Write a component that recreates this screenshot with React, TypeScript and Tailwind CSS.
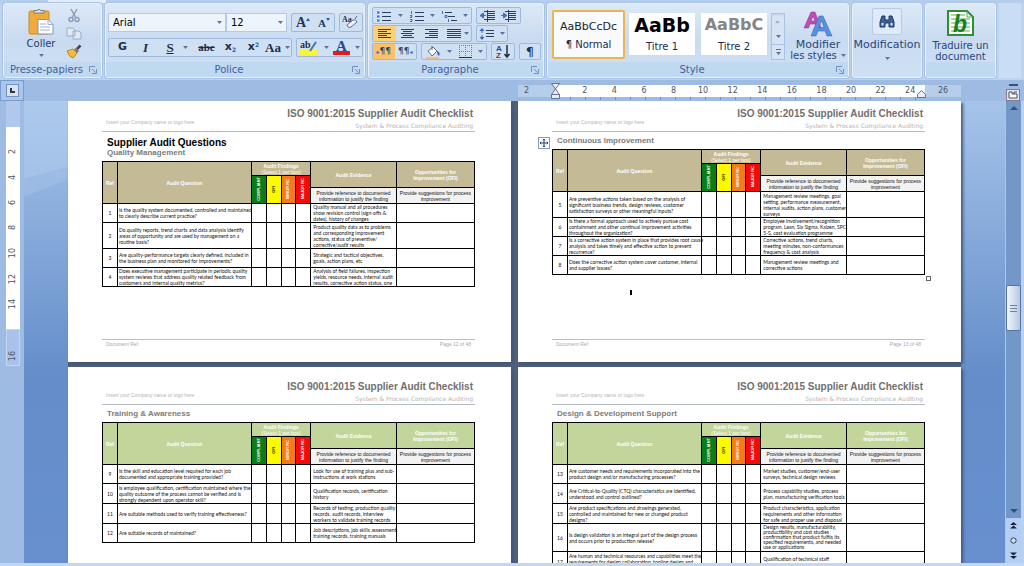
import React from 'react';

interface Row {
    ref: number;
    question: string;
    evidence: string;
    height: string;
    dense?: boolean;
}

interface PageData {
    title?: string;
    section: string;
    head: string;
    footer: string;
    rows: Row[];
    selected?: boolean;
}

const TAN = 'bg-[#c4bb96]';
const GREEN = 'bg-[#c2d69b]';
const SHORT = 'h-[19px]';
const MID = 'h-[20px]';
const TALL = 'h-[26px]';

const pages: PageData[] = [
    {
        title: 'Supplier Audit Questions',
        section: 'Quality Management',
        head: TAN,
        footer: 'Page 12 of 48',
        rows: [
            { ref: 1, height: SHORT, question: 'Is the quality system documented, controlled and maintained\nto clearly describe current practice?', evidence: 'Quality manual and all procedures\nshow revision control (sign-offs &\ndates), history of changes' },
            { ref: 2, height: TALL, question: 'Do quality reports, trend charts and data analysis identify\nareas of opportunity and are used by management on a\nroutine basis?', evidence: 'Product quality data as to problems\nand corresponding improvement\nactions, status of preventive/\ncorrective/audit results' },
            { ref: 3, height: SHORT, question: 'Are quality-performance targets clearly defined, included in\nthe business plan and monitored for improvements?', evidence: 'Strategic and tactical objectives,\ngoals, action plans, etc' },
            { ref: 4, height: SHORT, question: 'Does executive management participate in periodic quality\nsystem reviews that address quality related feedback from\ncustomers and internal quality metrics?', evidence: 'Analysis of field failures, inspection\nyields, resource needs, internal audit\nresults, corrective action status, one' },
        ],
    },
    {
        section: 'Continuous Improvement',
        head: TAN,
        footer: 'Page 13 of 48',
        selected: true,
        rows: [
            { ref: 5, height: TALL, question: 'Are preventive actions taken based on the analysis of\nsignificant business trends, design reviews, customer\nsatisfaction surveys or other meaningful inputs?', evidence: 'Management review meetings, goal\nsetting, performance measurement,\ninternal audits, action plans, customer\nsurveys' },
            { ref: 6, height: SHORT, question: 'Is there a formal approach used to actively pursue cost\ncontainment and other continual improvement activities\nthroughout the organization?', evidence: 'Employee involvement/recognition\nprogram, Lean, Six Sigma, Kaizen, SPC,\n5-S, cost evaluation programme' },
            { ref: 7, height: SHORT, question: 'Is a corrective action system in place that provides root cause\nanalysis and takes timely and effective action to prevent\nrecurrence?', evidence: 'Corrective actions, trend charts,\nmeeting minutes, non-conformances\nfrequency & cost analysis' },
            { ref: 8, height: SHORT, question: 'Does the corrective action system cover customer, internal\nand supplier issues?', evidence: 'Management review meetings and\ncorrective actions' },
        ],
    },
    {
        section: 'Training & Awareness',
        head: GREEN,
        footer: 'Page 14 of 48',
        rows: [
            { ref: 9, height: SHORT, question: 'Is the skill and education level required for each job\ndocumented and appropriate training provided?', evidence: 'Look for use of training plus and sub-\ninstructions at work stations' },
            { ref: 10, height: MID, question: 'Is employee qualification, certification maintained where the\nquality outcome of the process cannot be verified and is\nstrongly dependent upon operator skill?', evidence: 'Qualification records, certification\nhistory' },
            { ref: 11, height: MID, question: 'Are suitable methods used to verify training effectiveness?', evidence: 'Records of testing, production quality\nrecords, audit records, interview\nworkers to validate training records' },
            { ref: 12, height: SHORT, question: 'Are suitable records of maintained?', evidence: 'Job descriptions, job skills assessment,\ntraining records, training manuals' },
        ],
    },
    {
        section: 'Design & Development Support',
        head: GREEN,
        footer: 'Page 15 of 48',
        rows: [
            { ref: 13, height: SHORT, question: 'Are customer needs and requirements incorporated into the\nproduct design and/or manufacturing processes?', evidence: 'Market studies, customer/end-user\nsurveys, technical design reviews' },
            { ref: 14, height: MID, question: 'Are Critical-to-Quality (CTQ) characteristics are identified,\nunderstood and control outlined?', evidence: 'Process capability studies, process\nplan, manufacturing verification tools' },
            { ref: 15, height: MID, question: 'Are product specifications and drawings generated,\ncontrolled and maintained for new or changed product\ndesigns?', evidence: 'Product characteristics, application\nrequirements and other information\nfor safe and proper use and disposal' },
            { ref: 16, height: 'h-[28px]', dense: true, question: 'Is design validation is an integral part of the design process\nand occurs prior to production release?', evidence: 'Design results, manufacturability,\nproductibility and cost studies\nconfirmation that product fulfils its\nspecified requirements, and needed\nuse or applications' },
            { ref: 17, height: MID, question: 'Are human and technical resources and capabilities meet the\nrequirements for design collaboration, tooling design and\nmanufacturing?', evidence: 'Qualification of technical staff\nhardware and/or capabilities, CAD' },
        ],
    },
];

const findings = [
    { label: 'COMPLIANT', style: 'bg-[#0a7d17] text-white' },
    { label: 'OFI', style: 'bg-[#fdf900] text-black' },
    { label: 'MINOR NC', style: 'bg-[#f47a1c] text-white' },
    { label: 'MAJOR NC', style: 'bg-[#f50a0a] text-white' },
];

const AuditTable: React.FC<{ page: PageData }> = ({ page }) => (
    <table className="w-full table-fixed border-collapse text-[5px] leading-[6px] text-[#111] [&_td]:border [&_td]:border-black [&_td]:p-0 [&_th]:border [&_th]:border-black [&_th]:p-0">
        <colgroup>
            <col className="w-[4%]" />
            <col className="w-[36%]" />
            <col className="w-[4%]" />
            <col className="w-[4%]" />
            <col className="w-[4%]" />
            <col className="w-[4%]" />
            <col className="w-[23%]" />
            <col className="w-[21%]" />
        </colgroup>
        <thead>
            <tr className="h-[14px] text-white">
                <th rowSpan={3} className={page.head}>Ref</th>
                <th rowSpan={3} className={page.head}>Audit Question</th>
                <th colSpan={4} className={page.head}>
                    Audit Findings
                    <span className="block font-normal">(Select 1 per box)</span>
                </th>
                <th rowSpan={2} className={page.head}>Audit Evidence</th>
                <th rowSpan={2} className={page.head}>Opportunities for<br />Improvement (OFI)</th>
            </tr>
            <tr className="h-[12px]">
                {findings.map((f) => (
                    <th key={f.label} rowSpan={2} className={f.style}>
                        <span className="inline-block rotate-180 text-[4px] [writing-mode:vertical-rl]">{f.label}</span>
                    </th>
                ))}
            </tr>
            <tr className="h-[16px]">
                <th className="bg-[#f2f2f2] font-normal whitespace-pre">{'Provide reference to documented\ninformation to justify the finding'}</th>
                <th className="bg-[#f2f2f2] font-normal whitespace-pre">{'Provide suggestions for process\nimprovement'}</th>
            </tr>
        </thead>
        <tbody className="font-['Lato',sans-serif]">
            {page.rows.map((row) => (
                <tr key={row.ref} className={row.height}>
                    <td className="text-center">{row.ref}</td>
                    <td className="whitespace-pre"><div className="pl-px">{row.question}</div></td>
                    <td />
                    <td />
                    <td />
                    <td />
                    <td className="whitespace-pre"><div className={row.dense ? 'pl-0.5 leading-[5px]' : 'pl-0.5'}>{row.evidence}</div></td>
                    <td />
                </tr>
            ))}
        </tbody>
    </table>
);

const Page: React.FC<{ page: PageData; top: string }> = ({ page, top }) => (
    <article className={`flex h-[261px] flex-col bg-white pr-9 pl-[34px] font-['Liberation_Sans',Arial,sans-serif] shadow-[2px_2px_3px_#3f5678] ${top}`}>
        <header className="flex items-end justify-between border-b border-[#b4bcc4] pr-0.5 pl-1 text-[#b4b4b4]">
            <p className="text-[5px] leading-[18px]">Insert your Company name or logo here</p>
            <div className="text-right">
                <p className="text-[10px] leading-[12px] font-bold text-[#707070]">ISO 9001:2015 Supplier Audit Checklist</p>
                <p className="text-[6px] leading-[11px] font-['DejaVu_Sans',sans-serif]">System &amp; Process Compliance Auditing</p>
            </div>
        </header>
        <div className={page.title ? 'pt-[5px] pb-[3px] pl-[5px]' : 'pt-1 pb-[3px] pl-[5px]'}>
            {page.title && <h1 className="text-[10px] leading-[11px] font-bold text-black">{page.title}</h1>}
            <h2 className="text-[8px] leading-[10px] font-bold text-[#7c7c7c]">{page.section}</h2>
        </div>
        <div className="relative">
            <AuditTable page={page} />
            {page.selected && (
                <>
                    <svg className="absolute -top-3 -left-3.5 size-3" viewBox="0 0 12 12" aria-hidden="true">
                        <rect x=".5" y=".5" width="11" height="11" fill="#fff" stroke="#8a9fc0" />
                        <path d="M6 2v8M2 6h8M4.8 3.2L6 2l1.2 1.2M4.800 8.800L6 10l1.200-1.200M3.200 4.800L2 6l1.200 1.200M8.800 4.800L10 6 8.800 7.200" stroke="#23406e" fill="none" />
                    </svg>
                    <span className="absolute -right-1.5 -bottom-1.5 size-[5px] border border-[#666] bg-white" />
                    <span className="absolute -bottom-5 left-[21%] h-[5px] w-0.5 bg-black" />
                </>
            )}
        </div>
        <footer className="mt-auto mb-[14px] flex justify-between border-t border-[#bdbdbd] px-1 text-[5px] leading-[8px] text-[#aaa]">
            <span>Document Ref:</span>
            <span>{page.footer}</span>
        </footer>
    </article>
);

const Caret: React.FC = () => (
    <svg className="h-[3px] w-[5px] shrink-0" viewBox="0 0 5 3" aria-hidden="true"><path d="M0 0h5L2.500 3z" fill="#5a74a0" /></svg>
);

const Launcher: React.FC<{ label: string }> = ({ label }) => (
    <button aria-label={label} className="mr-1 ml-auto">
        <svg className="size-2" viewBox="0 0 8 8" aria-hidden="true"><path d="M.5 6V.5H6M3 3l3.500 3.500M7.500 3v4.500H3" stroke="#7691bd" fill="none" /></svg>
    </button>
);

interface GroupProps {
    label?: string;
    launcher?: boolean;
    width: string;
    children: React.ReactNode;
}

const Group: React.FC<GroupProps> = ({ label, launcher, width, children }) => (
    <section className={`flex h-[75px] shrink-0 flex-col rounded-[3px] border border-[#e8f2fc] bg-linear-to-b from-[#dce8f6] via-[#c9dbf1] to-[#cfe0f4] shadow-[0_0_0_1px_#a9c3e4] ${width}`}>
        <div className="min-h-0 flex-1">{children}</div>
        {label !== undefined && (
            <div className="flex h-[15px] items-center bg-[#c1d8f1] text-[#3f62a0]">
                <span className="flex-1 text-center whitespace-nowrap">{label}</span>
                {launcher && <Launcher label={`Options ${label}`} />}
            </div>
        )}
    </section>
);

const BOX = 'flex h-[19px] items-center rounded-[2px] border border-[#9db9dc] bg-[#cfe0f3]';

// three or four text lines with optional bullets, used by every paragraph button
const Lines: React.FC<{ d: string; extra?: React.ReactNode }> = ({ d, extra }) => (
    <svg className="h-3 w-4 shrink-0" viewBox="0 0 16 12" aria-hidden="true">
        <path d={d} stroke="#2b3f63" fill="none" />
        {extra}
    </svg>
);

const Clipboard: React.FC = () => (
    <Group label="Presse-papiers" launcher width="w-[99px]">
        <div className="flex h-full pt-1 pl-5">
            <button className="flex w-[34px] flex-col items-center text-[#1e3a6e]">
                <svg className="h-7 w-7" viewBox="0 0 28 28" aria-hidden="true">
                    <rect x="2" y="3" width="20" height="23" rx="1.500" fill="#f0ab3c" stroke="#c98a2b" />
                    <path d="M7 5V2.500h3Q12 0 14 2.500h3V5z" fill="#dfe3ea" stroke="#7d7a72" />
                    <path d="M11 11.500h10l5 5V26H11z" fill="#fff" stroke="#8396b8" />
                    <path d="M21 11.500v5h5M13 16h6M13 19h10M13 22h10" stroke="#9db0cf" fill="none" />
                </svg>
                <span className="pt-0.5 leading-3">Coller</span>
                <span className="mt-1"><Caret /></span>
            </button>
            <div className="ml-1.5 flex w-5 flex-col items-center gap-1">
                <button aria-label="Couper">
                    <svg className="h-[15px] w-4" viewBox="0 0 16 15" aria-hidden="true"><path d="M5 1l5 9M11 1l-5 9" stroke="#8c9dbb" strokeWidth="1.500" /><circle cx="5" cy="11.500" r="2" fill="none" stroke="#8c9dbb" strokeWidth="1.500" /><circle cx="11" cy="11.500" r="2" fill="none" stroke="#8c9dbb" strokeWidth="1.500" /></svg>
                </button>
                <button aria-label="Copier">
                    <svg className="h-[13px] w-4" viewBox="0 0 16 13" aria-hidden="true"><path d="M1 1h6l2 2v6H1zM7 4h6l2 2v6H7z" fill="#e3e9f2" stroke="#9aabc8" /></svg>
                </button>
                <button aria-label="Reproduire la mise en forme">
                    <svg className="h-[15px] w-4" viewBox="0 0 16 15" aria-hidden="true"><path d="M1 7l6-2 4 4-4 5q-4-1-6-7z" fill="#f2bf45" stroke="#b98622" /><path d="M8 5l2-1 3 3-2 2z" fill="#777" /><path d="M11 5l3.500-3.500" stroke="#3d4454" strokeWidth="2.500" /></svg>
                </button>
            </div>
        </div>
    </Group>
);

const FontGroup: React.FC = () => (
    <Group label="Police" launcher width="w-[260px]">
        <div className="flex items-center pt-[9px] pl-0.5">
            <label className="relative w-[118px]">
                <select aria-label="Police" className="h-[19px] w-full appearance-none border border-[#b3c9e6] bg-[#eef4fb] pl-1 text-black">
                    <option>Arial</option>
                </select>
                <span className="pointer-events-none absolute inset-y-0 right-1 flex items-center"><Caret /></span>
            </label>
            <label className="relative w-[61px]">
                <select aria-label="Taille" className="h-[19px] w-full appearance-none border border-[#b3c9e6] bg-[#eef4fb] pl-1 text-black">
                    <option>12</option>
                </select>
                <span className="pointer-events-none absolute inset-y-0 right-1 flex items-center"><Caret /></span>
            </label>
            <div className={`ml-1 w-[44px] justify-around font-['Liberation_Serif',serif] font-bold text-[#1f3358] ${BOX}`}>
                <button className="flex text-[14px] leading-4">A<svg className="mt-0.5 size-1" viewBox="0 0 4 4" aria-hidden="true"><path d="M0 4h4L2 1z" fill="#2d5aa8" /></svg></button>
                <button className="flex text-[11px] leading-4">A<svg className="mt-0.5 size-1" viewBox="0 0 4 4" aria-hidden="true"><path d="M0 1h4L2 4z" fill="#2d5aa8" /></svg></button>
            </div>
            <button aria-label="Effacer la mise en forme" className={`ml-1 w-6 justify-center ${BOX}`}>
                <svg className="h-[15px] w-[18px]" viewBox="0 0 18 15" aria-hidden="true">
                    <text x="0" y="7" fontSize="8" fontFamily="Liberation Serif, serif" fontWeight="bold" fill="#1f3358">Aa</text>
                    <path d="M5 10l6-5q3-1 4 2l-6 5q-3 2-4-2z" fill="#f4f5f8" stroke="#5d6c8a" /><path d="M13 4l2-3" stroke="#5d6c8a" />
                </svg>
            </button>
        </div>
        <div className="flex items-center pt-[6px] pl-0.5 text-[#1f2c48]">
            <div className={`w-[184px] pl-0.5 ${BOX}`}>
                <button className="w-[23px] text-[11px] font-bold">G</button>
                <button className="w-[23px] font-['Liberation_Serif',serif] text-[13px] font-bold italic">I</button>
                <button className="w-[26px] font-['Liberation_Serif',serif] text-[13px] font-bold underline">S</button>
                <Caret />
                <button className="ml-1.5 w-[25px] font-['Liberation_Serif',serif] text-[11px] font-bold line-through">abc</button>
                <button className="w-[23px] text-[11px] font-bold">x<sub className="text-[6px] text-[#2d5aa8]">2</sub></button>
                <button className="w-[23px] text-[11px] font-bold">x<sup className="text-[6px] text-[#2d5aa8]">2</sup></button>
                <button className="mr-1 font-['Liberation_Serif',serif] text-[13px] font-bold">Aa</button>
                <Caret />
            </div>
            <div className={`ml-1 w-[67px] justify-around ${BOX}`}>
                <button aria-label="Surlignage">
                    <svg className="h-[17px] w-5" viewBox="0 0 20 17" aria-hidden="true">
                        <rect x="1" y="10" width="17" height="6" fill="#f7f53a" />
                        <text x="1" y="9" fontSize="10" fontFamily="Liberation Serif, serif" fontWeight="bold" fill="#1f2c48">ab</text>
                        <path d="M11 12l6-9" stroke="#53719f" strokeWidth="2" />
                    </svg>
                </button>
                <Caret />
                <button aria-label="Couleur de police">
                    <svg className="h-[17px] w-[17px]" viewBox="0 0 17 17" aria-hidden="true">
                        <text x="3" y="12" fontSize="15" fontFamily="Liberation Serif, serif" fontWeight="bold" fill="#24499a">A</text>
                        <rect y="12" width="17" height="4" fill="#df1b1b" />
                    </svg>
                </button>
                <Caret />
            </div>
        </div>
    </Group>
);

const PBOX = 'flex h-[17px] items-center rounded-[2px] border border-[#9db9dc] bg-[#cfe0f3]';

const ParagraphGroup: React.FC = () => (
    <Group label="Paragraphe" launcher width="w-[176px]">
        <div className="flex flex-col gap-px pt-[3px] pl-[3px]">
            <div className="flex gap-1">
                <div className={`w-[100px] justify-around ${PBOX}`}>
                    <button aria-label="Puces"><Lines d="M6 2.500h9M6 6.500h9M6 10.500h9" extra={<path d="M1 1.500h2.500v2H1zM1 5.500h2.500v2H1zM1 9.500h2.500v2H1z" fill="#3f6fc0" />} /></button>
                    <Caret />
                    <button aria-label="Numérotation"><Lines d="M6 2.500h9M6 6.500h9M6 10.500h9" extra={<path d="M2.500 1v3M1 5.500h2v1l-2 1h2M1 9.500h2v2H1" stroke="#3f6fc0" fill="none" />} /></button>
                    <Caret />
                    <button aria-label="Liste à plusieurs niveaux"><Lines d="M4 2.500h7M7 6.500h7M10 10.500h6" extra={<path d="M1.500 1v3M4 5.500h2v2H4zM7.500 9v3" stroke="#3f6fc0" fill="none" />} /></button>
                    <Caret />
                </div>
                <div className={`w-[45px] justify-around ${PBOX}`}>
                    <button aria-label="Diminuer le retrait"><Lines d="M4 1.500h11M8 3.500h7M8 5.500h7M8 7.500h7M4 9.500h11M7.500 0v12" extra={<path d="M0 5.500L3.500 3v5zM3 5.500h3" fill="#3f6fc0" stroke="#3f6fc0" />} /></button>
                    <button aria-label="Augmenter le retrait"><Lines d="M4 1.500h11M8 3.500h7M8 5.500h7M8 7.500h7M4 9.500h11M7.500 0v12" extra={<path d="M6 5.500L2.500 3v5zM0 5.500h3" fill="#3f6fc0" stroke="#3f6fc0" />} /></button>
                </div>
            </div>
            <div className="flex gap-1">
                <div className={`w-[100px] ${PBOX}`}>
                    <button aria-label="Aligner à gauche" className="flex h-full w-[23px] items-center justify-center bg-[#fbd077]"><Lines d="M1 1.500h13M1 3.500h9M1 5.500h13M1 7.500h9M1 9.500h13" /></button>
                    <button aria-label="Centrer" className="flex w-6 justify-center"><Lines d="M1 1.500h13M3 3.500h9M1 5.500h13M3 7.500h9M1 9.500h13" /></button>
                    <button aria-label="Aligner à droite" className="flex w-6 justify-center"><Lines d="M1 1.500h13M5 3.500h9M1 5.500h13M5 7.500h9M1 9.500h13" /></button>
                    <button aria-label="Justifier" className="flex w-5 justify-center"><Lines d="M1 1.500h14M1 3.500h14M1 5.500h14M1 7.500h14M1 9.500h14" /></button>
                    <Caret />
                </div>
                <button aria-label="Interligne" className={`w-8 justify-around ${PBOX}`}>
                    <Lines d="M7 2.500h8M7 5.500h8M7 8.500h8" extra={<path d="M3 0l2.500 3h-5zM3 12L.500 9h5zM2.500 3h1v2h-1zM2.500 7h1v2h-1z" fill="#3067c4" />} />
                    <Caret />
                </button>
            </div>
            <div className="flex gap-1">
                <div className={`w-[45px] ${PBOX}`}>
                    <button className="h-full w-[22px] bg-[#fbc06a] text-[9px] text-[#2b3f63]"><span className="text-[6px] text-[#3067c4]">▸</span>¶¶</button>
                    <button className="w-[22px] text-[9px] text-[#2b3f63]">¶¶<span className="text-[6px] text-[#3067c4]">◂</span></button>
                </div>
                <div className={`w-[66px] justify-around ${PBOX}`}>
                    <button aria-label="Trame de fond">
                        <svg className="h-[14px] w-4" viewBox="0 0 16 14" aria-hidden="true"><path d="M3 6l5-4 4 4-5 5z" fill="#fff" stroke="#5d6c8a" /><path d="M7 5V1" stroke="#5d6c8a" /><path d="M12 6q4 1 2 5-2-1-2-5z" fill="#3067c4" /><path d="M1 12h13v2H1z" fill="#e8bf95" /></svg>
                    </button>
                    <Caret />
                    <button aria-label="Bordures">
                        <svg className="size-[13px]" viewBox="0 0 13 13" aria-hidden="true"><path d="M.500 0v12M6.500 0v12M12.500 0v12M0 .500h13M0 6.500h13" stroke="#6f7f9c" strokeDasharray="1 1" /><path d="M0 12.500h13" stroke="#1f2c48" /></svg>
                    </button>
                    <Caret />
                </div>
                <button aria-label="Trier" className={`w-6 justify-center ${PBOX}`}>
                    <svg className="h-[15px] w-4" viewBox="0 0 16 15" aria-hidden="true">
                        <text x="1" y="7" fontSize="8" fontFamily="Liberation Sans, sans-serif" fontWeight="bold" fill="#24499a">A</text>
                        <text x="1" y="14" fontSize="8" fontFamily="Liberation Sans, sans-serif" fontWeight="bold" fill="#a52323">Z</text>
                        <path d="M12 1v12M9.500 10l2.500 3 2.500-3" stroke="#1f2c48" strokeWidth="1.500" fill="none" />
                    </svg>
                </button>
                <button className={`w-[22px] justify-center text-[13px] text-[#1f2c48] ${PBOX}`}>¶</button>
            </div>
        </div>
    </Group>
);

const StyleGroup: React.FC = () => (
    <Group label="Style" launcher width="w-[302px]">
        <div className="flex h-full items-start pt-1.5 pl-1 text-[#1b2a4d]">
            <button className="flex h-[49px] w-[73px] flex-col items-center justify-center rounded-[2px] border-2 border-[#eab64c] bg-[#f8fafd]">
                <span className="text-[11px] leading-5 text-[#222]">AaBbCcDc</span>
                <span className="leading-4">¶ Normal</span>
            </button>
            <button className="mt-[3px] ml-1 flex h-[42px] w-[66px] flex-col items-center justify-between bg-white">
                <span className="text-[19px] leading-6 font-bold text-black">AaBb</span>
                <span className="leading-4">Titre 1</span>
            </button>
            <button className="mt-[3px] ml-1.5 flex h-[42px] w-[66px] flex-col items-center justify-between bg-white">
                <span className="text-[16px] leading-6 font-bold text-[#858585]">AaBbC</span>
                <span className="leading-4">Titre 2</span>
            </button>
            <div className="mt-[3px] ml-1 flex h-[47px] w-3.5 flex-col divide-y divide-[#a9c3e4] border border-[#a9c3e4] bg-[#d5e3f4]">
                <button aria-label="Haut" className="flex flex-1 rotate-180 items-center justify-center opacity-50"><Caret /></button>
                <button aria-label="Bas" className="flex flex-1 items-center justify-center"><Caret /></button>
                <button aria-label="Autres" className="flex flex-1 flex-col items-center justify-center gap-0.5"><span className="h-px w-[5px] bg-[#5a74a0]" /><Caret /></button>
            </div>
            <button className="ml-1 flex w-[58px] flex-col items-center text-[11px] leading-[11px] whitespace-nowrap text-[#274679]">
                <svg className="h-[29px] w-[30px]" viewBox="0 0 30 29" aria-hidden="true">
                    <path d="M1 18L8 2h4l6 16h-4l-1.500-4H7l-1.500 4zM8 11h4l-2-5z" fill="#c04bb4" fillRule="evenodd" stroke="#8c2f86" strokeWidth=".5" />
                    <path d="M8 26l8-20h4l9 20h-5l-2-5h-7l-2 5zM16 17.500h5l-2.500-7z" fill="#5b8fdd" fillRule="evenodd" stroke="#2f5fa8" strokeWidth=".5" />
                </svg>
                <span>Modifier</span>
                <span className="flex items-center gap-1 text-[10px]">les styles <Caret /></span>
            </button>
        </div>
    </Group>
);

const Ribbon: React.FC = () => (
    <nav className="bg-[#bdd3ee] pb-0.5 text-[10px]">
        <div className="flex h-[3px] bg-[#b4cdec]"><span className="ml-12 w-[58px] bg-[#e4eefa]" /></div>
        <div className="mr-[3px] ml-[3px] flex gap-[3px]">
            <Clipboard />
            <FontGroup />
            <ParagraphGroup />
            <StyleGroup />
            <Group width="w-[70px]">
                <button className="flex w-full flex-col items-center pt-1 text-[11px] leading-3 text-[#274679]">
                    <span className="flex h-[27px] w-[30px] items-center justify-center rounded-[2px] border border-[#b5cbe8] bg-[#dfeaf8]">
                        <svg className="h-[13px] w-4" viewBox="0 0 16 13" aria-hidden="true"><path d="M3 1h3v4h4V1h3l2 6v5h-5V8H6v4H1V7z" fill="#3f5f96" stroke="#1f3a6c" /><path d="M2.500 8h2v2.500h-2zM11.500 8h2v2.500h-2z" fill="#dfe9f8" /></svg>
                    </span>
                    <span className="pt-1">Modification</span>
                    <span className="mt-1.5"><Caret /></span>
                </button>
            </Group>
            <Group label="" width="w-[71px]">
                <button className="flex w-full flex-col items-center pt-1.5 leading-[11px] whitespace-nowrap text-[#274679]">
                    <svg className="mb-1 h-[26px] w-[27px]" viewBox="0 0 27 26" aria-hidden="true">
                        <path d="M1 1h19l6 6v18H1z" fill="#fff" stroke="#2e8f2e" strokeWidth="2" />
                        <path d="M20 1v6h6M4 5h14M4 9h19M4 13h19M4 17h19M4 21h19" stroke="#58aa58" fill="none" />
                        <text x="6" y="22" fontSize="23" fontStyle="italic" fontWeight="bold" fontFamily="Liberation Sans, sans-serif" fill="#178017">b</text>
                    </svg>
                    <span>Traduire un</span>
                    <span>document</span>
                </button>
            </Group>
            <div className="h-[75px] flex-1 bg-[#c9def5]" />
        </div>
    </nav>
);

const marks = [2, 4, 6, 8, 10, 12, 14, 16, 18, 20, 22, 24];
const sideMarks = [2, 4, 6, 8, 10, 12, 14];

const TopRuler: React.FC = () => (
    <div className="flex h-[21px] shrink-0 bg-[#9dbbe3] text-[8px] text-[#4c5566]">
        <div className="flex w-6 items-center justify-center border border-[#7a9bcf] bg-[#aac6ec]">
            <button aria-label="Tabulation" className="flex size-[13px] items-center justify-center border border-[#7391c2] bg-[#d5e3f5]">
                <span className="size-[5px] border-b-2 border-l-2 border-[#333]" />
            </button>
        </div>
        <div className="grid flex-1 grid-cols-2 gap-x-[7px] px-11 pt-[5px]">
            <div />
            <div className="relative h-[12px] leading-[12px]">
                <div className="flex">
                    <span className="w-[38px] bg-[#b7cdec] pl-1.5">2</span>
                    <div className="flex flex-1 bg-white pl-[14px]">
                        {marks.map((m) => <span key={m} className="flex-1 text-center">{m}</span>)}
                    </div>
                    <span className="w-9 bg-[#b7cdec] text-center">26</span>
                </div>
                <div className="mx-[38px] h-[3px] bg-[repeating-linear-gradient(90deg,transparent_0_14px,#6f8fbe_14px_15px)]" />
                <svg className="absolute top-[-2px] left-[33px] h-4 w-[9px]" viewBox="0 0 9 16" aria-hidden="true"><path d="M.500.500h8L4.500 6zM4.500 6l4 5.500h-8zM.500 11.500h8v4h-8z" fill="#e6eef8" stroke="#64748f" /></svg>
                <svg className="absolute top-[5px] right-[35px] h-[9px] w-[9px]" viewBox="0 0 9 9" aria-hidden="true"><path d="M4.500.500l4 4v3h-8v-3z" fill="#e6eef8" stroke="#64748f" /></svg>
            </div>
        </div>
        <div className="flex w-[19px] flex-col items-center gap-[3px] pt-1 pr-[3px]">
            <span className="h-0.5 w-[9px] bg-[#37537f]" />
            <button aria-label="Règle">
                <svg className="h-3 w-[14px]" viewBox="0 0 14 12" aria-hidden="true"><rect x=".5" y=".5" width="13" height="11" fill="#dde6f2" stroke="#8e7a86" /><path d="M3 3v6h8V5H6V3zM8 5V3h3" fill="#fff" stroke="#4c4c58" /></svg>
            </button>
        </div>
    </div>
);

const SideRuler: React.FC = () => (
    <div className="w-6 shrink-0 bg-[#9dbbe3] text-[8px] text-[#4c5566]">
        <div className="mr-1 ml-1.5 flex flex-col">
            <span className="h-[26px] bg-[#b0c8ec]" />
            <div className="flex h-[202px] flex-col bg-white py-3">
                {sideMarks.map((m) => (
                    <span key={m} className="flex flex-1 items-center justify-center"><span className="rotate-180 leading-3 [writing-mode:vertical-rl]">{m}</span></span>
                ))}
            </div>
            <span className="flex h-[37px] items-end justify-center border border-[#c3d6f1] bg-[#a8c2e9] pb-1"><span className="rotate-180 leading-3 [writing-mode:vertical-rl]">16</span></span>
        </div>
    </div>
);

const ScrollBar: React.FC = () => (
    <div className="mr-[3px] flex w-4 shrink-0 flex-col border-l border-[#a9c6ef] bg-[#7397c6]">
        <button aria-label="Défiler vers le haut" className="flex h-3.5 items-center justify-center"><svg className="h-1 w-2" viewBox="0 0 8 4" aria-hidden="true"><path d="M0 4h8L4 0z" fill="#35527f" /></svg></button>
        <div className="flex-1 pt-[170px]">
            <div className="flex h-[46px] flex-col items-center justify-center gap-0.5 rounded-[2px] border border-[#56749f] bg-linear-to-r from-[#f1f6fc] to-[#b5c8e1]">
                <span className="h-px w-[7px] bg-[#6b82a6]" />
                <span className="h-px w-[7px] bg-[#6b82a6]" />
                <span className="h-px w-[7px] bg-[#6b82a6]" />
            </div>
        </div>
        <button aria-label="Défiler vers le bas" className="flex h-3.5 items-center justify-center"><svg className="h-1 w-2" viewBox="0 0 8 4" aria-hidden="true"><path d="M0 0h8L4 4z" fill="#35527f" /></svg></button>
        <div className="flex h-[45px] flex-col items-center justify-around bg-[#b5cff4]">
            <button aria-label="Page précédente"><svg className="h-[7px] w-[7px]" viewBox="0 0 7 7" aria-hidden="true"><path d="M3.500 0L7 3H0zM3.500 3.500L7 6.500H0z" fill="#16233f" /></svg></button>
            <button aria-label="Sélectionner l’objet"><svg className="size-[7px]" viewBox="0 0 7 7" aria-hidden="true"><circle cx="3.500" cy="3.500" r="2.700" fill="#cdd9ea" stroke="#3d4759" /></svg></button>
            <button aria-label="Page suivante"><svg className="h-[7px] w-[7px]" viewBox="0 0 7 7" aria-hidden="true"><path d="M0 .500h7L3.500 3.500zM0 4h7L3.500 7z" fill="#16233f" /></svg></button>
        </div>
    </div>
);

const App: React.FC = () => {
    return (
        <div className="flex h-screen flex-col overflow-hidden bg-[#b9d0ee] font-['DejaVu_Sans',Verdana,sans-serif]">
            <Ribbon />
            <TopRuler />
            <div className="flex min-h-0 flex-1">
                <SideRuler />
                <main className="relative flex-1 overflow-hidden bg-linear-to-b from-[#a6c4ea] via-[#648dc9] via-60% to-[#6890cf]">
                    <svg className="absolute top-0 left-0 h-24 w-11" viewBox="0 0 44 96" aria-hidden="true">
                        <path d="M0 0h44v66L0 78z" fill="#b4cff0" opacity=".5" />
                        <path d="M0 78l44-12v12L0 96z" fill="#a5c1e8" opacity=".5" />
                    </svg>
                    <div className="relative grid grid-cols-2 gap-x-[7px] gap-y-[5px] bg-[linear-gradient(#52607a,#52607a)] bg-clip-content px-11">
                        {pages.map((page, i) => (
                            <Page key={page.section} page={page} top={i < 2 ? 'pt-[7px]' : 'pt-[14px]'} />
                        ))}
                    </div>
                </main>
                <ScrollBar />
            </div>
            <div className="h-[3px] shrink-0 bg-[#c3d7ef]" />
        </div>
    );
};

export default App;
